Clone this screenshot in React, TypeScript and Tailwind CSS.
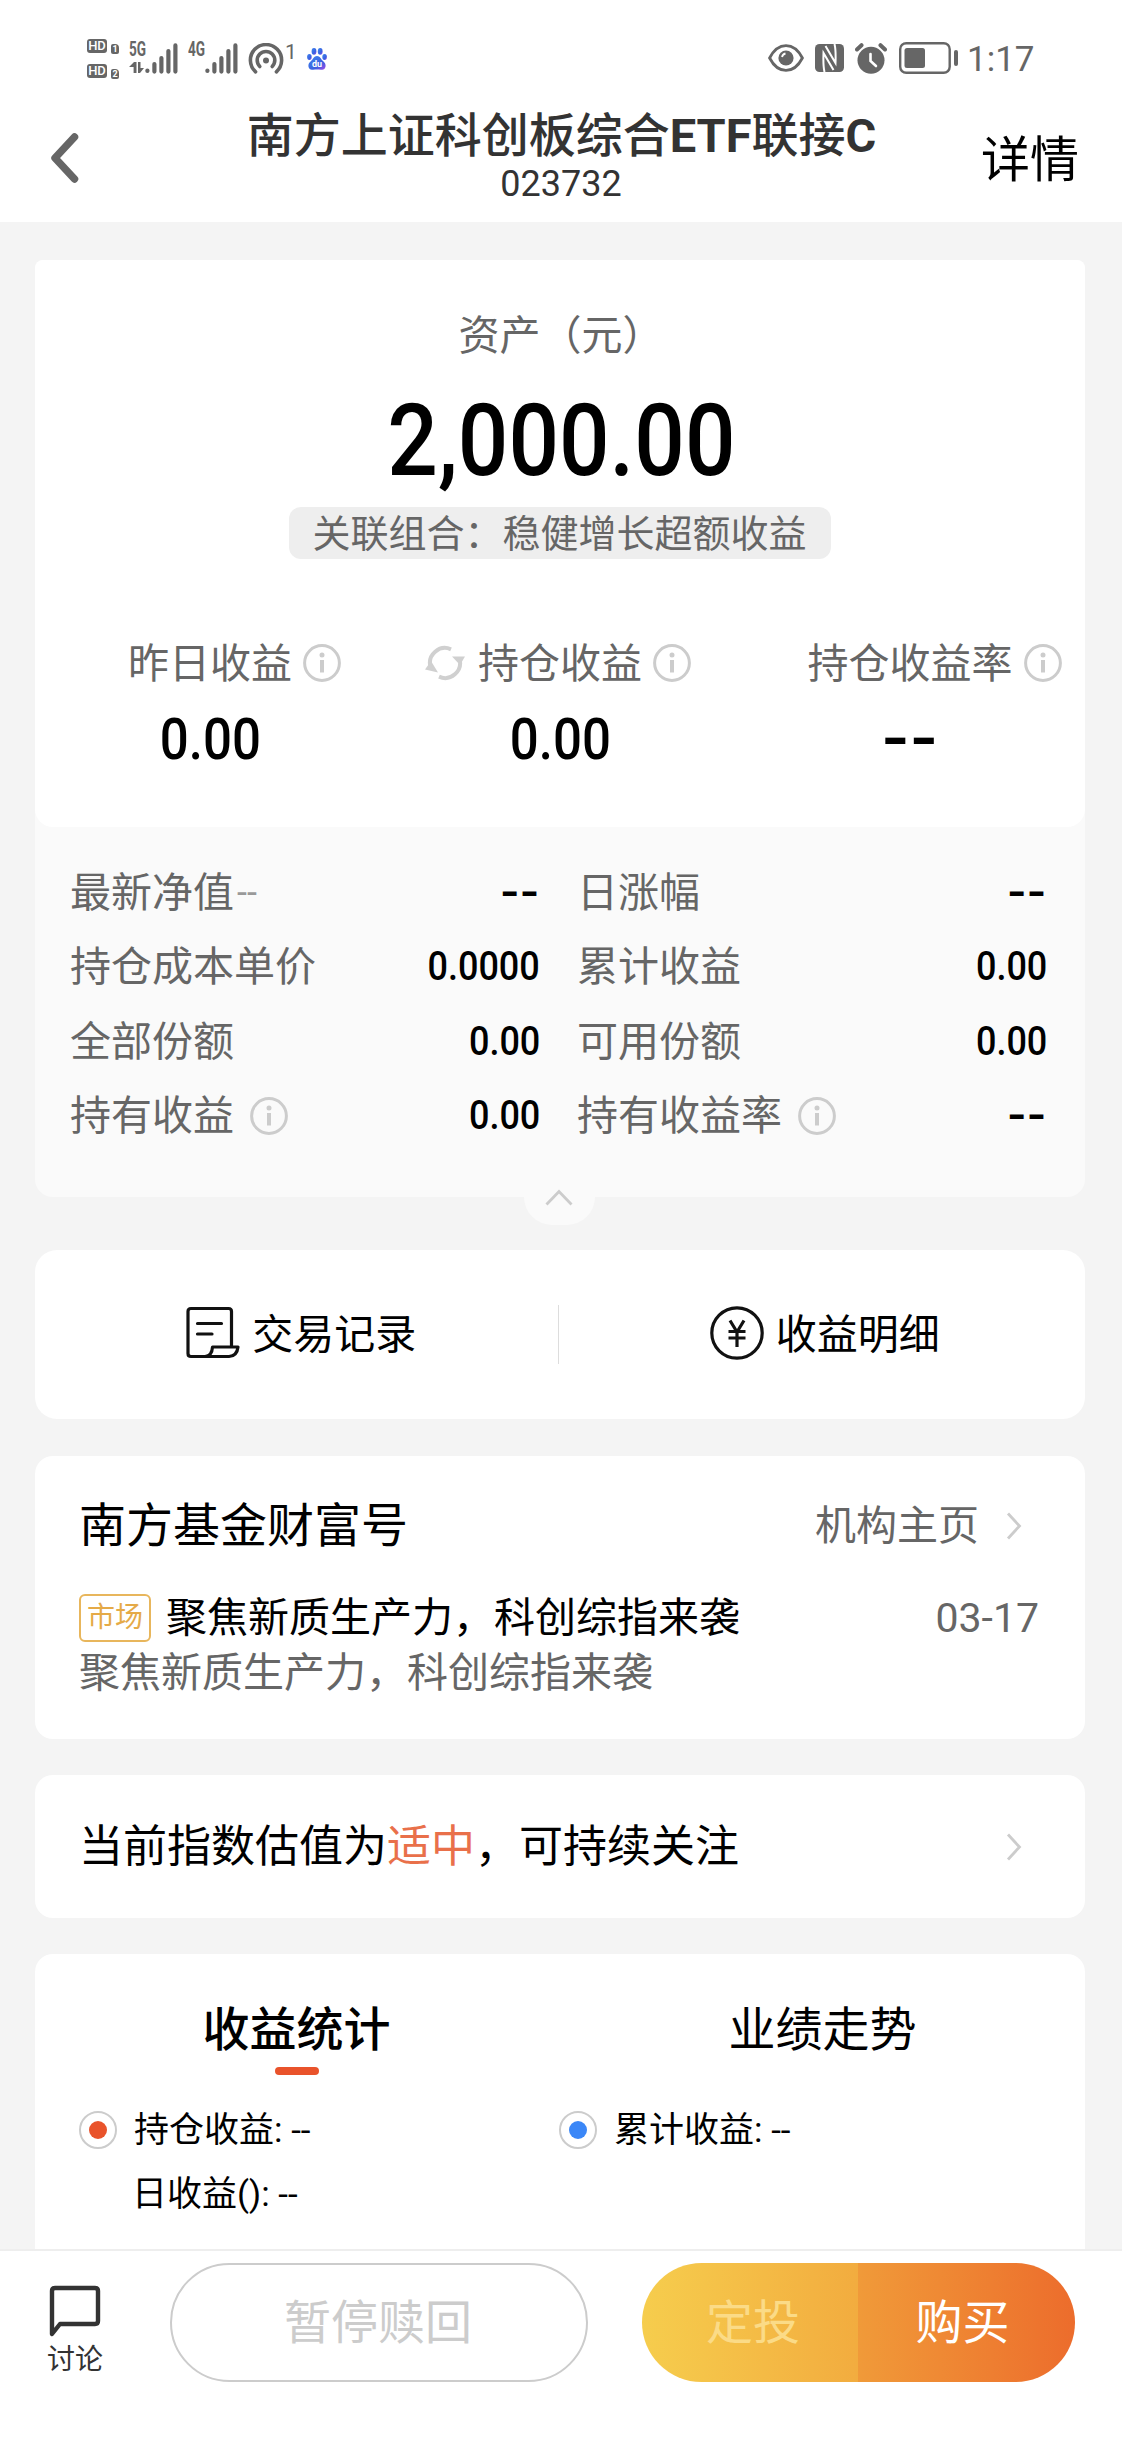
import type { ReactNode } from 'react'
import clsx from 'clsx'

const InfoIcon = ({ className }: { className?: string }) => (
  <svg viewBox="0 0 38 38" className={clsx('w-[38px] h-[38px] shrink-0', className)} fill="none" stroke="#ccc">
    <circle cx="19" cy="19" r="17.4" strokeWidth="3" />
    <path d="M19 16V28.5" strokeWidth="4" />
    <circle cx="19" cy="11" r="2.5" fill="#ccc" stroke="none" />
  </svg>
)

const RefreshIcon = ({ className }: { className?: string }) => (
  <svg viewBox="0 0 40 36" className={clsx('w-10 h-9', className)} fill="none" stroke="#d0d0d0" strokeWidth="4">
    <path d="M5.5 22A15 15 0 0 1 26 4.3" />
    <path d="M34.5 14A15 15 0 0 1 14 31.7" />
    <path d="M27 11.5L40 11.5L35 20z" fill="#d0d0d0" stroke="none" />
    <path d="M13 27.5L0 24.5L6 16z" fill="#d0d0d0" stroke="none" />
  </svg>
)

const ArrowRight = () => (
  <svg viewBox="0 0 16 28" className="w-4 h-7" fill="none" stroke="#ccc" strokeWidth="2.8">
    <path d="M2 1.5L13.5 14L2 26.5" />
  </svg>
)

const SignalBars = () => (
  <svg viewBox="0 0 34 31" className="w-[34px] h-[31px]" stroke="#666" strokeWidth="4.2" strokeLinecap="round">
    <path d="M2.4 27.5V28M9.4 21V28.6M16.4 15V28.6M23.4 8V28.6M30.4 2.4V28.6" />
  </svg>
)

const HdBadge = ({ sim }: { sim: string }) => (
  <div className="flex items-end gap-1 h-[15px]">
    <span className="w-[20px] h-[14px] mb-px rounded-[3px] bg-[#666] text-white text-[13px] leading-[14px] font-medium text-center">
      HD
    </span>
    <span className="w-[8px] h-[10px] rounded-[2px] rounded-tr-[4px] bg-[#666] text-white text-[9px] leading-[10px] font-bold text-center">
      {sim}
    </span>
  </div>
)

const StatusBar = () => (
  <div className="flex justify-between h-[90px] pt-[39px] pl-[87px] pr-[88px] text-[#666]">
    <div className="flex items-start">
      <div className="flex flex-col gap-[10px] w-[33px] mr-[9px]">
        <HdBadge sim="1" />
        <HdBadge sim="2" />
      </div>
      <div className="relative w-4 h-[35px]">
        <span className="block mt-[2px] text-[20px] leading-[17px] font-bold origin-left scale-x-[.68]">5G</span>
        <svg viewBox="0 0 15 12" className="absolute left-0 top-[23px] w-[15px] h-3" fill="#666">
          <path d="M5 0H7.5V11H4.6V5H0zM9 0H11.5V6H15L11 11H9z" />
        </svg>
      </div>
      <div className="mt-1"><SignalBars /></div>
      <div className="w-[17px] ml-[9px]">
        <span className="block mt-[2px] text-[20px] leading-[17px] font-bold origin-left scale-x-[.68]">4G</span>
      </div>
      <div className="mt-1"><SignalBars /></div>
      <svg viewBox="0 0 36 32" className="w-9 h-8 ml-[9px] mt-1" fill="none" stroke="#666" strokeWidth="3.6" strokeLinecap="round">
        <path d="M7.6 28.8A15.6 15.6 0 1 1 28.4 28.8" />
        <path d="M11.8 23.5A8.8 8.8 0 1 1 24.2 23.5" />
        <circle cx="18" cy="17.5" r="3" fill="#666" stroke="none" />
      </svg>
      <span className="w-[12px] ml-px mt-[3px] text-[21px] leading-5">1</span>
      <svg viewBox="0 0 20 22" className="w-[20px] h-[22px] ml-[10px] mt-[9px]">
        <defs>
          <linearGradient id="paw" x1="0" y1="0" x2="1" y2="1">
            <stop offset="0" stopColor="#3f86ee" />
            <stop offset=".65" stopColor="#3a5fe0" />
            <stop offset="1" stopColor="#a64be8" />
          </linearGradient>
        </defs>
        <g fill="url(#paw)">
          <ellipse cx="7" cy="3.4" rx="2.4" ry="3.3" />
          <ellipse cx="13.2" cy="3.4" rx="2.4" ry="3.3" />
          <ellipse cx="2.4" cy="9" rx="2.3" ry="3" />
          <ellipse cx="17.6" cy="9" rx="2.3" ry="3" />
          <path d="M10 8C7 8 6.2 11 4 13C1 15.5 1 18 2 20C3.3 22.5 7 21.6 10 21.6S16.7 22.5 18 20C19 18 19 15.5 16 13C13.8 11 13 8 10 8z" />
        </g>
        <text x="10" y="19" fontSize="9" fontWeight="700" fill="#fff" textAnchor="middle">du</text>
      </svg>
    </div>

    <div className="flex items-start">
      <svg viewBox="0 0 36 28" className="w-9 h-7 mt-[5px]" fill="none" stroke="#666" strokeWidth="2.8">
        <path d="M1.6 14Q8 1.6 18 1.6T34.4 14Q28 26.4 18 26.4T1.6 14z" />
        <circle cx="18" cy="14" r="7.6" fill="#666" stroke="none" />
        <path d="M14 13A4.5 4.5 0 0 1 17.5 9.5" stroke="#fff" strokeWidth="1.8" />
      </svg>
      <svg viewBox="0 0 29 28" className="w-[29px] h-7 ml-[11px] mt-[5px]">
        <rect width="29" height="28" rx="4.5" fill="#666" />
        <path d="M9.5 28Q8 22 8.5 9L18.5 26M19.5 0Q21 6 20.5 19L10.5 2" fill="none" stroke="#fff" strokeWidth="2" />
      </svg>
      <svg viewBox="0 0 32 31" className="w-8 h-[31px] ml-[11px] mt-1" stroke="#666">
        <circle cx="16" cy="17.3" r="13.5" fill="#666" stroke="none" />
        <path d="M2 6.5L6.5 2.2M30 6.5L25.5 2.2" strokeWidth="4" strokeLinecap="round" />
        <path d="M15.5 11V18L21 23" fill="none" stroke="#fff" strokeWidth="2.6" strokeLinecap="round" />
      </svg>
      <svg viewBox="0 0 60 32" className="w-[60px] h-8 ml-3 mt-[3px]" fill="none" stroke="#666">
        <rect x="1.2" y="1.2" width="49.5" height="29.6" rx="6" strokeWidth="2.4" />
        <rect x="5.5" y="6" width="20.5" height="20" rx="2.5" fill="#666" stroke="none" />
        <path d="M57 10V22" strokeWidth="4" strokeLinecap="round" />
      </svg>
      <span className="ml-2 mt-px w-[67px] text-[35px] leading-10 whitespace-nowrap">1:17</span>
    </div>
  </div>
)

const Header = () => (
  <header className="h-[222px] bg-white">
    <StatusBar />
    <div className="relative flex flex-col items-center text-[#333] pt-[18px]">
      <h1 className="pl-px text-[47px] leading-[56px] font-medium whitespace-nowrap">
        南方上证科创板综合<span className="font-bold">ETF</span>联接<span className="font-bold">C</span>
      </h1>
      <p className="text-[36px] leading-[40px]">023732</p>
      <svg viewBox="0 0 28 52" className="absolute left-[51px] top-[42px] w-7 h-[52px]" fill="none" stroke="#666" strokeWidth="7.5" strokeLinecap="round" strokeLinejoin="round">
        <path d="M23.5 5L4 26L23.5 47" />
      </svg>
      <span className="absolute right-[43px] top-[41px] text-[49px] leading-[60px] text-black">详情</span>
    </div>
  </header>
)

const summary = [
  { label: '昨日收益', value: '0.00' },
  { label: '持仓收益', value: '0.00', refresh: true },
  { label: '持仓收益率', value: '--' },
]

const details = [
  { label: '最新净值', suffix: '--', value: '--' },
  { label: '日涨幅', value: '--' },
  { label: '持仓成本单价', value: '0.0000' },
  { label: '累计收益', value: '0.00' },
  { label: '全部份额', value: '0.00' },
  { label: '可用份额', value: '0.00' },
  { label: '持有收益', value: '0.00', info: true },
  { label: '持有收益率', value: '--', info: true },
]

const Dashes = ({ className }: { className?: string }) => (
  <span className={clsx('font-bold', className)}>--</span>
)

const Assets = () => (
  <section className="relative h-[937px] rounded-t-[8px] rounded-b-[18px] bg-[#fafafa]">
    <div className="h-[567px] rounded-t-[8px] rounded-b-[18px] bg-white flex flex-col items-center pt-[51px]">
      <p className="pl-[2px] text-[41px] leading-[50px] text-[#666]">资产（元）</p>
      <p className="mt-[20px] pl-[3px] text-[100px] leading-[120px] font-medium text-black scale-x-[.89]">2,000.00</p>
      <p className="mt-[6px] h-[52px] px-6 rounded-xl bg-[#eee] text-[38px] leading-[54px] text-[#666] whitespace-nowrap -indent-px">
        关联组合：稳健增长超额收益
      </p>
      <div className="grid grid-cols-3 w-full mt-20">
        {summary.map((item) => (
          <div key={item.label} className="flex flex-col items-center">
            <div className="relative text-[41px] leading-[50px] text-[#666] whitespace-nowrap">
              {item.refresh && <RefreshIcon className="absolute right-full top-[6px] mr-[13px]" />}
              {item.label}
              <InfoIcon className="absolute left-full top-[5px] ml-[11px]" />
            </div>
            {item.value === '--' ? (
              <Dashes className="mt-[18px] text-[58px] leading-[62px] scale-x-[1.25]" />
            ) : (
              <span className="mt-[18px] pl-[2px] text-[58px] leading-[64px] font-medium scale-x-[.88]">{item.value}</span>
            )}
          </div>
        ))}
      </div>
    </div>

    <div className="grid grid-cols-[470px_470px] gap-x-[37px] auto-rows-[74.3px] pt-[29px] pl-[35px]">
      {details.map((item) => (
        <div key={item.label} className="flex items-center text-[41px] leading-[74px] text-[#666]">
          <span>{item.label}</span>
          {item.suffix && <span className="ml-[3px] text-[36px] text-[#999] leading-[74px]">{item.suffix}</span>}
          {item.info && <InfoIcon className="ml-4" />}
          {item.value === '--' ? (
            <Dashes className="ml-auto text-[40px] text-black origin-right scale-x-[1.25]" />
          ) : (
            <span className="ml-auto text-[40px] font-medium text-black origin-right scale-x-[.9]">{item.value}</span>
          )}
        </div>
      ))}
    </div>

    {/* Collapse handle */}
    <div className="absolute left-[489px] top-[937px] w-[71px] h-[28px] rounded-b-[36px] bg-[#fafafa]" />
    <svg viewBox="0 0 28 18" className="absolute left-[510px] top-[928px] w-7 h-[18px]" fill="none" stroke="#ccc" strokeWidth="2.8">
      <path d="M1.5 16.5L14 3.5L26.5 16.5" />
    </svg>
  </section>
)

const RecordIcon = () => (
  <svg viewBox="0 0 54 54" className="w-[54px] h-[54px] -mt-1" fill="none" stroke="#111" strokeWidth="3.2" strokeLinejoin="round" strokeLinecap="round">
    <path d="M45.5 41V5.5Q45.5 2.5 42.5 2.5H5Q2 2.5 2 5.5V47.5Q2 50.5 5 50.5H43Q51 50 52 41H26.5Q26 50 19 50.5" />
    <path d="M11.5 17.5H35.5M11.5 28H26" />
  </svg>
)

const YuanIcon = () => (
  <svg viewBox="0 0 54 54" className="w-[54px] h-[54px] -mt-1" fill="none" stroke="#111" strokeWidth="3.2">
    <circle cx="27" cy="27" r="25.2" />
    <path d="M20 14.5L27 26L34 14.5M27 26V41M18.5 25.5H35.5M18.5 32H35.5" />
  </svg>
)

const Action = ({ icon, label }: { icon: ReactNode; label: string }) => (
  <div className="flex items-center justify-center gap-3 flex-1 text-[41px] leading-[50px]">
    {icon}
    <span>{label}</span>
  </div>
)

const Actions = () => (
  <section className="flex h-[169px] mt-[53px] pl-[6px] rounded-[22px] bg-white">
    <Action icon={<RecordIcon />} label="交易记录" />
    <div className="self-center w-px h-[59px] -ml-[4px] mr-[6px] bg-[#ddd]" />
    <Action icon={<YuanIcon />} label="收益明细" />
  </section>
)

const News = () => (
  <section className="h-[283px] mt-[37px] rounded-[18px] bg-white pt-[41px] pl-[44px] pr-[46px]">
    <div className="flex items-center justify-between h-[58px]">
      <h2 className="text-[47px] leading-[58px]">南方基金财富号</h2>
      <div className="flex items-center gap-[27px] pr-[17px] text-[41px] leading-[56px] text-[#666]">
        机构主页
        <ArrowRight />
      </div>
    </div>
    <div className="flex items-center h-[54px] mt-9 text-[41px] leading-[54px]">
      <span className="w-[72px] h-[48px] mr-[15px] rounded-[6px] border-2 border-[#e8b65c] text-center text-[28px] leading-[44px] text-[#e5aa47]">
        市场
      </span>
      <span>聚焦新质生产力，科创综指来袭</span>
      <span className="ml-auto text-[#666]">03-17</span>
    </div>
    <p className="text-[41px] leading-[56px] text-[#666]">聚焦新质生产力，科创综指来袭</p>
  </section>
)

const Valuation = () => (
  <section className="flex items-center justify-between h-[143px] mt-9 rounded-[18px] bg-white pl-[44px] pr-[63px]">
    <p className="text-[44px] leading-[56px]">
      当前指数估值为<span className="text-[#e9704a]">适中</span>，可持续关注
    </p>
    <ArrowRight />
  </section>
)

const Radio = ({ className }: { className: string }) => (
  <span className="flex items-center justify-center w-[38px] h-[38px] mr-[17px] rounded-full border-2 border-[#ccc]">
    <span className={clsx('w-[18px] h-[18px] rounded-full', className)} />
  </span>
)

const Stats = () => (
  <section className="h-[295px] mt-9 rounded-t-[18px] bg-white pt-[46px]">
    <div className="grid grid-cols-2 text-center text-[47px] leading-[60px]">
      <div className="flex flex-col items-center pr-1 pl-[2px]">
        <span className="font-medium">收益统计</span>
        <span className="w-11 h-2 mt-[7px] rounded-full bg-[#e9532b]" />
      </div>
      <span>业绩走势</span>
    </div>
    <div className="grid grid-cols-[480px_1fr] pl-11 mt-[31px] text-[35px] leading-[46px]">
      <div className="flex items-center">
        <Radio className="bg-[#e9532b]" />
        <span className="pt-[2px]">持仓收益: --</span>
      </div>
      <div className="flex items-center">
        <Radio className="bg-[#3b87f7]" />
        <span className="pt-[2px]">累计收益: --</span>
      </div>
      <div className="pl-[53px] mt-[18px]">日收益(): --</div>
    </div>
  </section>
)

const BottomBar = () => (
  <footer className="flex h-[193px] border-t-2 border-[#eee] bg-white pt-3">
    <div className="flex flex-col items-center w-[150px] pt-[22px] text-[#333]">
      <svg viewBox="0 0 52 52" className="w-[52px] h-[52px]" fill="none" stroke="#333" strokeWidth="4.4" strokeLinejoin="round">
        <path d="M3 49V6Q3 3 6 3H46Q49 3 49 6V36Q49 39 46 39H11z" />
      </svg>
      <span className="mt-[6px] text-[28px] leading-[34px]">讨论</span>
    </div>
    <button className="w-[418px] h-[119px] ml-5 rounded-full border-2 border-[#ccc] pr-[2px] text-[47px] leading-[115px] text-[#ccc]">
      暂停赎回
    </button>
    <div className="flex w-[433px] h-[119px] ml-[54px] rounded-full overflow-hidden text-[47px] leading-[119px]">
      <button className="w-[216px] pl-[6px] bg-linear-to-r from-[#f6cd4d] to-[#f2ac3f] text-[#fbdb87]">定投</button>
      <button className="flex-1 pr-[8px] bg-linear-to-r from-[#f09a39] to-[#ec6c2c] text-white">购买</button>
    </div>
  </footer>
)

const App = () => {
  return (
    <div className="flex flex-col w-[1122px] h-[2442px] overflow-hidden bg-[#f4f4f4] text-black font-[Roboto,'Noto_Sans_CJK_SC',sans-serif]">
      <Header />
      <main className="h-[2027px] pt-[38px] pl-[35px] pr-[37px]">
        <Assets />
        <Actions />
        <News />
        <Valuation />
        <Stats />
      </main>
      <BottomBar />
    </div>
  )
}

export default App
